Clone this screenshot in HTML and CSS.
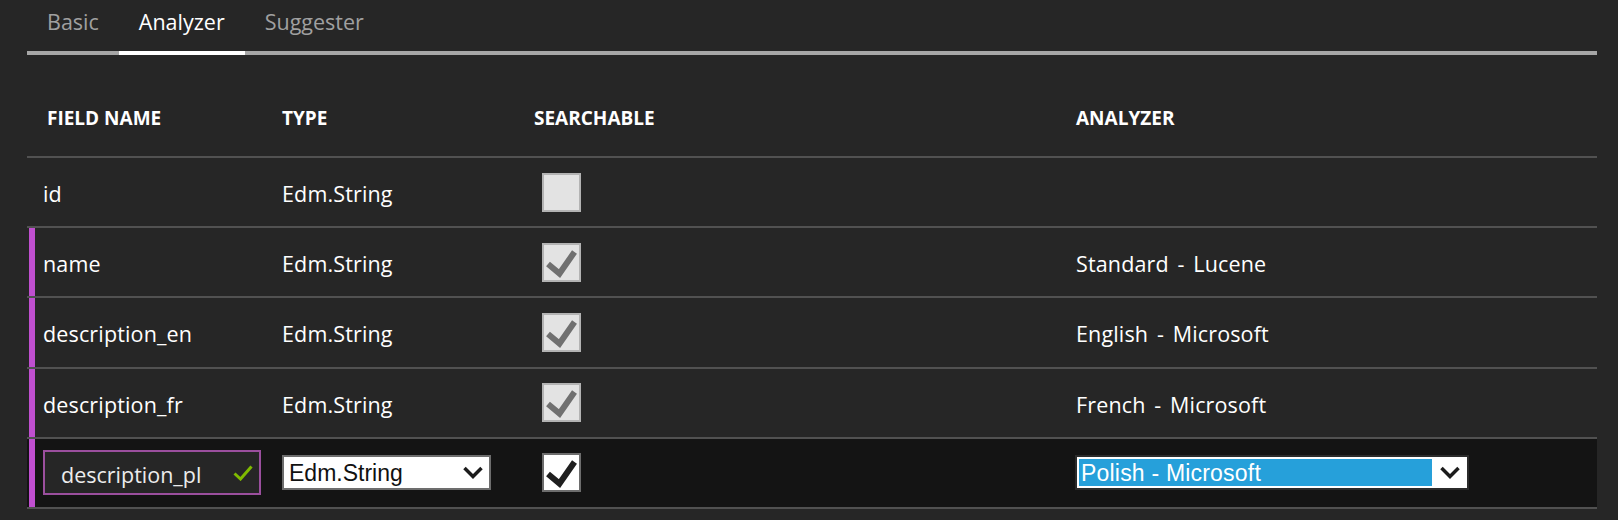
FILE: index.html
```html
<!DOCTYPE html>
<html lang="en">
<head>
<meta charset="utf-8">
<title>Index fields - Analyzer</title>
<link rel="stylesheet" href="styles.css">
</head>
<body>
<div class="page">
  <nav class="tabs">
    <span class="tab">Basic</span>
    <span class="tab active">Analyzer</span>
    <span class="tab">Suggester</span>
    <span class="tab-fill"></span>
  </nav>

  <div class="table">
    <div class="grid head">
      <div class="mark"></div>
      <div class="hcell c1">FIELD NAME</div>
      <div class="hcell">TYPE</div>
      <div class="hcell">SEARCHABLE</div>
      <div class="hcell">ANALYZER</div>
    </div>

    <div class="grid row">
      <div class="mark"></div>
      <div class="cell c1"><span class="txt">id</span></div>
      <div class="cell"><span class="txt">Edm.String</span></div>
      <div class="cell"><span class="cb"></span></div>
      <div class="cell"><span class="txt"></span></div>
    </div>

    <div class="grid row">
      <div class="mark on"></div>
      <div class="cell c1"><span class="txt">name</span></div>
      <div class="cell"><span class="txt">Edm.String</span></div>
      <div class="cell"><span class="cb"><svg viewBox="0 0 35 35" width="35" height="35"><polyline points="4,19 15.5,28.5 30.5,7" class="tick grey"/></svg></span></div>
      <div class="cell"><span class="txt an">Standard - Lucene</span></div>
    </div>

    <div class="grid row">
      <div class="mark on"></div>
      <div class="cell c1"><span class="txt">description_en</span></div>
      <div class="cell"><span class="txt">Edm.String</span></div>
      <div class="cell"><span class="cb"><svg viewBox="0 0 35 35" width="35" height="35"><polyline points="4,19 15.5,28.5 30.5,7" class="tick grey"/></svg></span></div>
      <div class="cell"><span class="txt an">English - Microsoft</span></div>
    </div>

    <div class="grid row">
      <div class="mark on"></div>
      <div class="cell c1"><span class="txt">description_fr</span></div>
      <div class="cell"><span class="txt">Edm.String</span></div>
      <div class="cell"><span class="cb"><svg viewBox="0 0 35 35" width="35" height="35"><polyline points="4,19 15.5,28.5 30.5,7" class="tick grey"/></svg></span></div>
      <div class="cell"><span class="txt an">French - Microsoft</span></div>
    </div>

    <div class="grid row editing">
      <div class="mark on"></div>
      <div class="cell c1">
        <div class="field">
          <span class="field-txt">description_pl</span>
          <svg class="ok" viewBox="0 0 20 16" width="20" height="16"><polyline points="1.5,8.5 7.5,14 18.5,1.5"/></svg>
        </div>
      </div>
      <div class="cell">
        <div class="dd type">
          <span class="dd-txt">Edm.String</span>
          <svg class="chev" viewBox="0 0 20 13" width="20" height="13"><polyline points="1.5,2 10,10.5 18.5,2"/></svg>
        </div>
      </div>
      <div class="cell"><span class="cb on"><svg viewBox="0 0 35 35" width="35" height="35"><polyline points="4,19 15.5,28.5 30.5,7" class="tick dark"/></svg></span></div>
      <div class="cell">
        <div class="dd az">
          <span class="dd-sel">Polish - Microsoft</span>
          <span class="dd-btn"><svg class="chev" viewBox="0 0 20 13" width="20" height="13"><polyline points="1.5,2 10,10.5 18.5,2"/></svg></span>
        </div>
      </div>
    </div>
  </div>
</div>
</body>
</html>
```

FILE: styles.css
```css
* { box-sizing: border-box; }

body {
  margin: 0;
  background: #262626;
  color: #ffffff;
  font-family: "Open Sans", "Noto Sans", sans-serif;
}

.page {
  margin-left: 27px;
  width: 1570px;
}

/* tabs */
.tabs {
  display: flex;
}
.tab {
  padding: 7px 20px 15px;
  font-size: 21.5px;
  line-height: 29px;
  color: #a0a0a0;
  border-bottom: 4px solid #a6a6a6;
}
.tab.active {
  color: #ffffff;
  border-bottom-color: #ffffff;
}
.tab-fill {
  flex: 1;
  border-bottom: 4px solid #a6a6a6;
}

/* table */
.grid {
  display: grid;
  grid-template-columns: 8px 247px 252px 542px 1fr;
}

.head {
  padding: 50px 0 25px;
}
.hcell {
  font-size: 19px;
  font-weight: 700;
  line-height: 26px;
  color: #ffffff;
}
.hcell.c1 { padding-left: 12px; }

.row {
  height: 70.2px;
  border-top: 2px solid #515151;
}
.row.editing {
  background: #141414;
  height: 72.2px;
  border-bottom: 2px solid #515151;
}

.mark {
  margin-left: 2px;
  width: 6px;
}
.mark.on { background: #c04fd0; }

.cell {
  display: flex;
  align-items: center;
}
.cell.c1 { padding-left: 8px; }

.txt {
  font-size: 21.5px;
  line-height: 29px;
  padding-top: 3px;
  letter-spacing: 0.15px;
  color: #ffffff;
}
.txt.an { word-spacing: 3px; }

/* checkboxes */
.cb {
  width: 39px;
  height: 39px;
  margin-left: 8px;
  border: 2px solid #b3b3b3;
  background: #e3e3e3;
  display: flex;
}
.cb.on {
  background: #ffffff;
  border-color: #6d6d6d;
}
.tick {
  fill: none;
  stroke-width: 6;
  stroke-linejoin: miter;
}
.tick.grey { stroke: #707070; }
.tick.dark { stroke: #1f1f1f; }

/* field name input */
.field {
  width: 218px;
  height: 45px;
  border: 2px solid #9b4f9e;
  background: #262626;
  display: flex;
  align-items: center;
  justify-content: space-between;
  padding: 0 6px 0 16px;
}
.field-txt {
  font-size: 21.5px;
  line-height: 29px;
  padding-top: 3px;
  color: #ececec;
}
.ok polyline {
  fill: none;
  stroke: #7fba00;
  stroke-width: 3;
}

/* drop-downs */
.dd {
  height: 35px;
  border: 2px solid #6d6d6d;
  background: #ffffff;
  display: flex;
  align-items: center;
  font-family: "Liberation Sans", Arial, sans-serif;
  font-size: 23px;
  line-height: 26px;
  color: #111111;
}
.dd.type {
  width: 209px;
  justify-content: space-between;
  padding: 0 6px 0 5px;
}
.dd.az {
  width: 394px;
  margin-left: -1px;
  border-color: #2b2b2b;
  padding: 2px 0 2px 2px;
  align-items: stretch;
}
.dd-sel {
  width: 353px;
  background: #26a0da;
  color: #ffffff;
  padding-left: 2px;
  letter-spacing: 0.2px;
  display: flex;
  align-items: center;
}
.dd-btn {
  flex: 1;
  display: flex;
  align-items: center;
  justify-content: center;
}
.chev polyline {
  fill: none;
  stroke: #1c1c1c;
  stroke-width: 3.5;
}
```
